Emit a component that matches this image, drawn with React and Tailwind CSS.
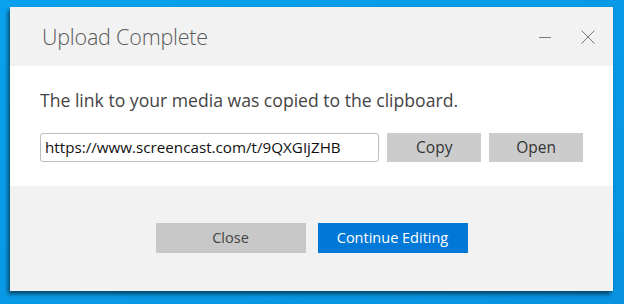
import React from 'react';

const font = { fontFamily: '"Open Sans", "Noto Sans", sans-serif' };

export default function App() {
  return (
    <div className="w-[624px] h-[304px] bg-gradient-to-br from-[#0aa2ee] to-[#0892e0] pt-[7px] pl-[10px] overflow-hidden" style={font}>
      <div className="w-[603px] h-[284px] flex flex-col shadow-[-2px_3px_4px_rgba(0,0,0,0.55)]">
        {/* title bar */}
        <div className="h-[59px] bg-[#f2f2f2] flex items-center pl-[32px] pr-[18px]">
          <span className="text-[21.5px] font-light text-[#5a5a5a] tracking-[-0.2px] mt-[2px]">Upload Complete</span>
          <div className="ml-auto flex items-center gap-[30px]">
            <svg width="12" height="12" viewBox="0 0 12 12">
              <path d="M0 6.5h12" stroke="#777" strokeWidth="1" />
            </svg>
            <svg width="14" height="14" viewBox="0 0 14 14">
              <path d="M0.5 0.5l13 13M13.5 0.5l-13 13" stroke="#777" strokeWidth="1" />
            </svg>
          </div>
        </div>

        {/* body */}
        <div className="h-[120px] bg-white px-[30px] pt-[22px]">
          <p className="text-[17.6px] text-[#444] leading-[24px]">The link to your media was copied to the clipboard.</p>
          <div className="flex items-center mt-[21px]">
            <div className="w-[340px] h-[29px] border border-[#bdbdbd] rounded-[3px] flex items-center px-[4px] text-[15.2px] text-[#111]">
              https://www.screencast.com/t/9QXGIjZHB
            </div>
            <button className="ml-[8px] w-[94px] h-[29px] bg-[#cccccc] text-[15.5px] text-[#333]">Copy</button>
            <button className="ml-[8px] w-[94px] h-[29px] bg-[#cccccc] text-[15.5px] text-[#333]">Open</button>
          </div>
        </div>

        {/* footer */}
        <div className="flex-1 bg-[#f2f2f2] flex justify-center items-start pt-[37px] gap-[12px]">
          <button className="w-[150px] h-[30px] bg-[#c8c8c8] text-[14.5px] text-[#444]">Close</button>
          <button className="w-[150px] h-[30px] bg-[#0078d7] text-[14.5px] text-white">Continue Editing</button>
        </div>
      </div>
    </div>
  );
}
